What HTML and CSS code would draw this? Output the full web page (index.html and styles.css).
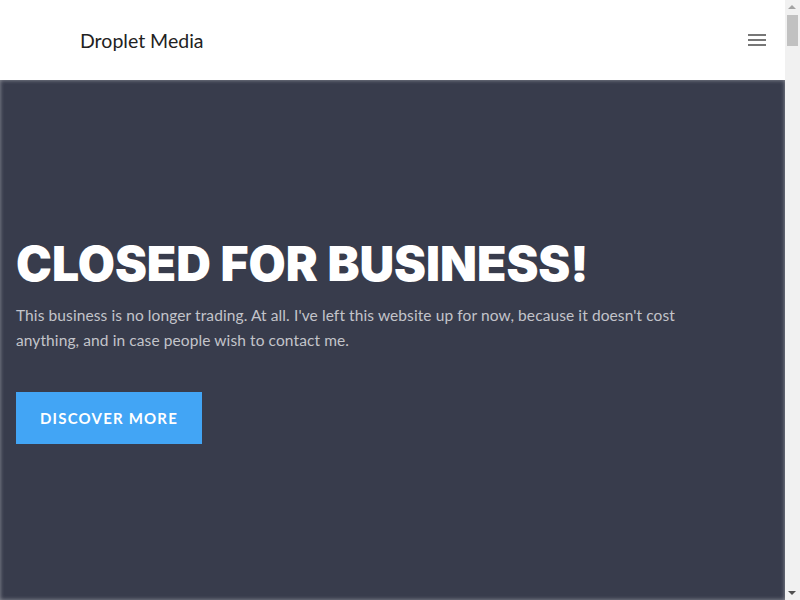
FILE: index.html
```html
<!DOCTYPE html>
<html lang="en">
<head>
    <meta charset="UTF-8">
    <meta name="viewport" content="width=device-width, initial-scale=1.0">
    <title>Droplet Media</title>
    <link rel="stylesheet" href="styles.css">
</head>
<body>

    <div class="page">
        <!-- Header -->
        <header class="site-header">
            <a class="brand" href="#">Droplet Media</a>
            <button class="menu-toggle" aria-label="Menu">
                <svg width="18" height="12" viewBox="0 0 18 12">
                    <rect x="0" y="0" width="18" height="2" fill="#777"></rect>
                    <rect x="0" y="5" width="18" height="2" fill="#777"></rect>
                    <rect x="0" y="10" width="18" height="2" fill="#777"></rect>
                </svg>
            </button>
        </header>

        <!-- Hero -->
        <section class="hero">
            <div class="hero-content">
                <h1>CLOSED FOR BUSINESS!</h1>
                <p>This business is no longer trading. At all. I've left this website up for now, because it doesn't cost anything, and in case people wish to contact me.</p>
                <a class="btn" href="#">Discover More</a>
            </div>
        </section>
    </div>

    <!-- Scrollbar -->
    <div class="scrollbar" aria-hidden="true">
        <span class="arrow up"></span>
        <span class="thumb"></span>
        <span class="arrow down"></span>
    </div>

</body>
</html>
```

FILE: styles.css
```css
/* General Styling */
html, body {
    margin: 0;
    padding: 0;
}

body {
    font-family: Lato, "Open Sans", sans-serif;
    background-color: #fff;
    color: #222;
}

.page {
    margin-right: 15px;
}

/* Header */
.site-header {
    height: 80px;
    display: flex;
    align-items: center;
    justify-content: space-between;
    padding: 0 19px 0 80px;
    background: #fff;
}

.brand {
    font-size: 19.5px;
    color: #222;
    text-decoration: none;
}

.menu-toggle {
    background: none;
    border: none;
    padding: 0;
    display: flex;
    cursor: pointer;
}

/* Hero */
.hero {
    height: 520px;
    background-color: #383c4c;
    box-shadow: inset 0 0 4px rgba(255,255,255,0.45);
    display: flex;
    align-items: center;
    padding: 0 16px;
}

.hero-content {
    max-width: 680px;
}

.hero h1 {
    font-family: Inter, sans-serif;
    font-weight: 900;
    font-size: 48px;
    line-height: 1.1;
    color: #fff;
    margin: 2px 0 12px;
}

.hero p {
    font-size: 15.5px;
    line-height: 25px;
    letter-spacing: 0.1px;
    color: #c3c4ca;
    margin: 0 0 39px;
}

.btn {
    display: inline-block;
    background-color: #42a5f5;
    color: #fff;
    text-decoration: none;
    text-transform: uppercase;
    font-weight: 700;
    font-size: 15px;
    letter-spacing: 1.2px;
    line-height: 52px;
    padding: 0 24px;
}

/* Scrollbar */
.scrollbar {
    position: fixed;
    top: 0;
    right: 0;
    width: 15px;
    height: 100%;
    background: #f1f1f1;
}

.thumb {
    position: absolute;
    top: 15px;
    left: 2px;
    width: 11px;
    height: 31px;
    background: #c1c1c1;
}

.arrow {
    position: absolute;
    left: 3px;
    width: 0;
    height: 0;
    border-left: 4.5px solid transparent;
    border-right: 4.5px solid transparent;
}

.arrow.up {
    top: 5px;
    border-bottom: 4.5px solid #a3a3a3;
}

.arrow.down {
    bottom: 5px;
    border-top: 4.5px solid #505050;
}
```
